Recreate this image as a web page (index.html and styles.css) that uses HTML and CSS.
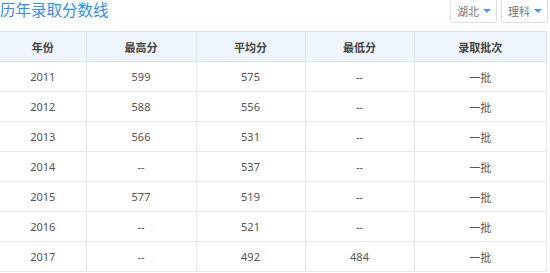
FILE: index.html
```html
<!DOCTYPE html>
<html lang="zh">
<head>
  <meta charset="UTF-8">
  <title>历年录取分数线</title>
  <link rel="stylesheet" href="styles.css">
</head>
<body>
  <div class="top-bar">
    <h2 class="title">历年录取分数线</h2>
    <div class="filters">
      <div class="select">湖北 <span class="caret"></span></div>
      <div class="select">理科 <span class="caret"></span></div>
    </div>
  </div>

  <table class="score-table">
    <colgroup>
      <col style="width:86px">
      <col style="width:110px">
      <col style="width:109px">
      <col style="width:109px">
      <col>
    </colgroup>
    <thead>
      <tr><th>年份</th><th>最高分</th><th>平均分</th><th>最低分</th><th>录取批次</th></tr>
    </thead>
    <tbody>
      <tr><td>2011</td><td>599</td><td>575</td><td>--</td><td>一批</td></tr>
      <tr><td>2012</td><td>588</td><td>556</td><td>--</td><td>一批</td></tr>
      <tr><td>2013</td><td>566</td><td>531</td><td>--</td><td>一批</td></tr>
      <tr><td>2014</td><td>--</td><td>537</td><td>--</td><td>一批</td></tr>
      <tr><td>2015</td><td>577</td><td>519</td><td>--</td><td>一批</td></tr>
      <tr><td>2016</td><td>--</td><td>521</td><td>--</td><td>一批</td></tr>
      <tr><td>2017</td><td>--</td><td>492</td><td>484</td><td>一批</td></tr>
    </tbody>
  </table>
</body>
</html>
```

FILE: styles.css
```css
* {
  margin: 0;
  padding: 0;
  box-sizing: border-box;
}

body {
  font-family: "Noto Sans", "Noto Sans CJK SC", sans-serif;
  font-size: 11px;
  color: #555;
  background: #fff;
  width: 550px;
  overflow: hidden;
}

.top-bar {
  display: flex;
  justify-content: space-between;
  align-items: flex-start;
  height: 31px;
}

.title {
  font-size: 15.5px;
  font-weight: normal;
  color: #3a8ee0;
  line-height: 20px;
}

.filters {
  display: flex;
  gap: 4px;
  padding-right: 2px;
}

.select {
  display: flex;
  align-items: center;
  gap: 4px;
  height: 23px;
  padding: 0 5px 0 6px;
  border: 1px solid #dcdfe4;
  border-top: none;
  border-radius: 0 0 3px 3px;
  color: #777;
  font-size: 11px;
}

.caret {
  width: 0;
  height: 0;
  border-left: 4px solid transparent;
  border-right: 4px solid transparent;
  border-top: 4px solid #4a9ae8;
}

.score-table {
  width: 547px;
  border-collapse: collapse;
  table-layout: fixed;
}

.score-table th,
.score-table td {
  height: 30px;
  text-align: center;
  border: 1px solid #e6e9ee;
  border-left-color: #eceef2;
}

.score-table tr > :first-child {
  border-left: none;
}

.score-table th {
  background: #eef5fd;
  color: #444;
  font-weight: bold;
  font-size: 11px;
  border-color: #dde3ea;
}
```
